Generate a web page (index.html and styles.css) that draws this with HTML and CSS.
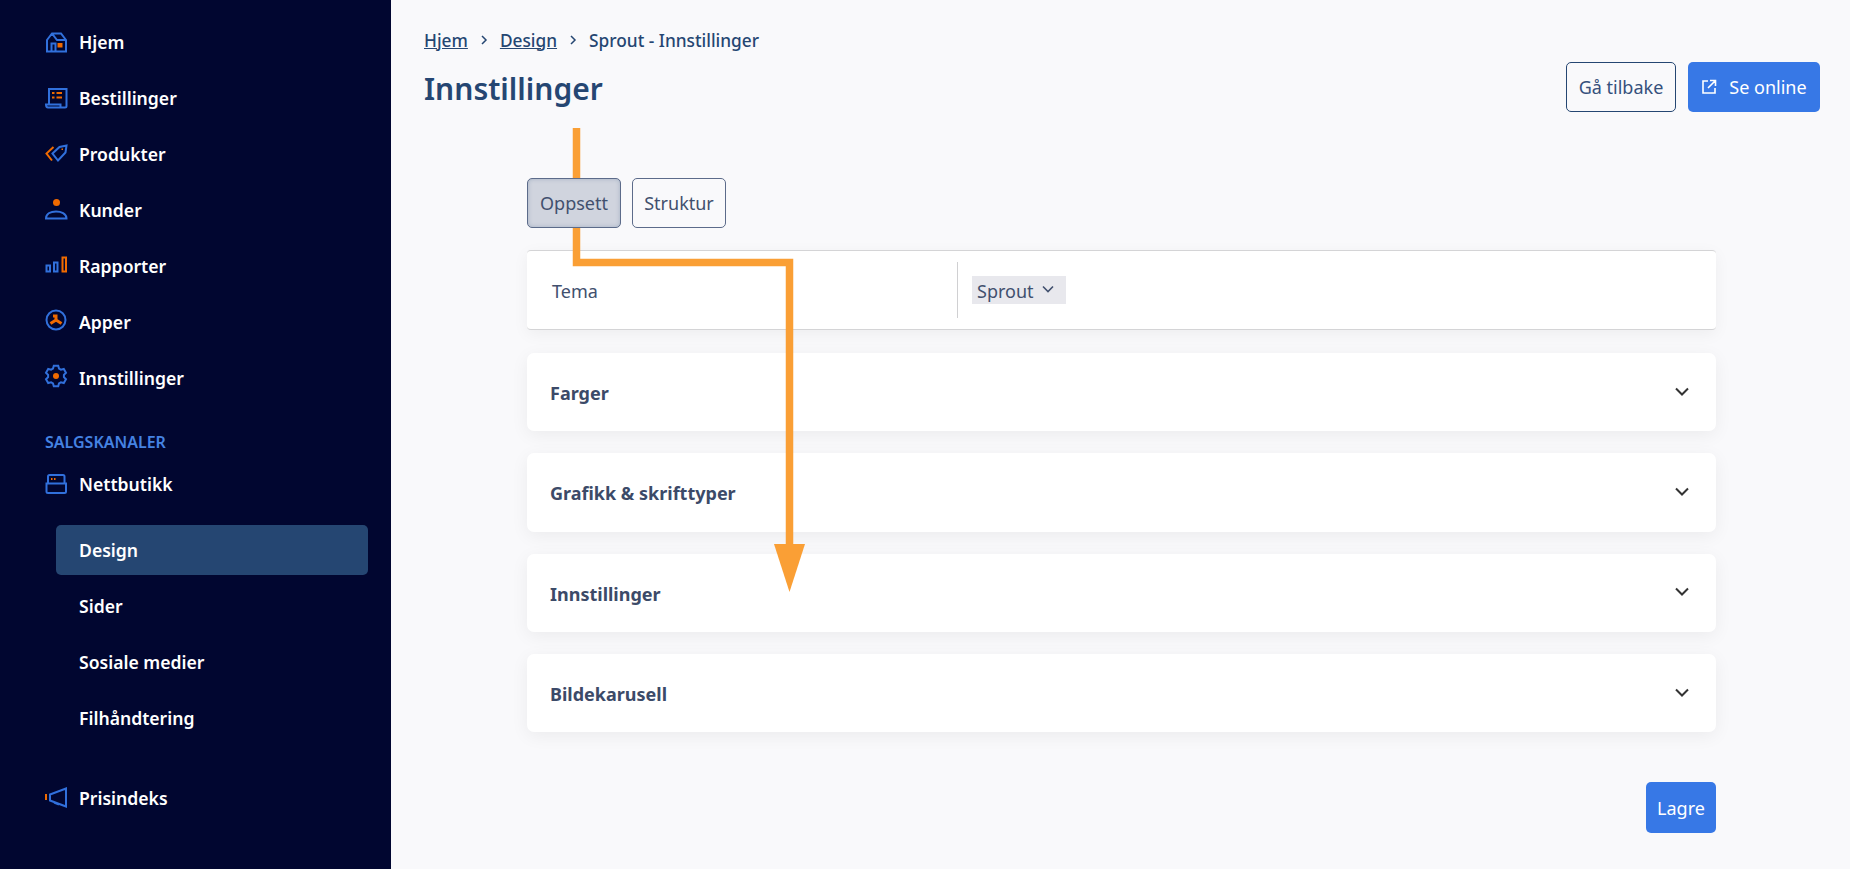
FILE: index.html
```html
<!DOCTYPE html>
<html lang="no">
<head>
<meta charset="UTF-8">
<meta name="viewport" content="width=device-width, initial-scale=1.0">
<title>Innstillinger</title>
<link rel="stylesheet" href="styles.css">
</head>
<body>

<aside class="sidebar">
    <nav class="nav-group">
        <a class="nav-item">
            <svg class="nav-icon" viewBox="0 0 22 22"><path class="ic-blue" d="M2 9 7 2.500H16L21 9V20.500H2ZM7 2.500 12 9H21M6.500 20.500V12.500H10.500V20.500"/><rect class="ic-orange-fill" x="12.500" y="12" width="5" height="4.500"/></svg>
            Hjem
        </a>
        <a class="nav-item">
            <svg class="nav-icon" viewBox="0 0 22 22"><path class="ic-blue" d="M4 17V2H21.500V19C21.500 20 21 20.500 20 20.500H3C1.800 20.500 1 19.500 1 17.500H15.500V20.500"/><path class="ic-orange" d="M7 6H9.500M7 10.500H9.500M11.500 6H17M11.500 10.500H17"/></svg>
            Bestillinger
        </a>
        <a class="nav-item">
            <svg class="nav-icon" viewBox="0 0 22 22"><path class="ic-blue" d="M7.500 10.500 14.500 4 21.500 2.500 20.500 9.500 13 17.500Z"/><path class="ic-orange" d="M8.500 4 1.500 10.500 7 17.500"/><rect class="ic-orange-fill" x="16.500" y="5.500" width="1.500" height="1.500"/></svg>
            Produkter
        </a>
        <a class="nav-item">
            <svg class="nav-icon" viewBox="0 0 22 22"><circle class="ic-orange-fill" cx="11.500" cy="3.500" r="3.500"/><path class="ic-blue" d="M1 19.500C1 14.500 6 12.500 11 12.500S21.500 14.500 21.500 19.500Z"/></svg>
            Kunder
        </a>
        <a class="nav-item">
            <svg class="nav-icon" viewBox="0 0 22 22"><path class="ic-blue" d="M1.500 10.500H5V16.500H1.500ZM9 7.500H12.500V16.500H9Z"/><path class="ic-orange" d="M17.500 2.500H21V16.500H17.500Z"/></svg>
            Rapporter
        </a>
        <a class="nav-item">
            <svg class="nav-icon" viewBox="0 0 22 22"><circle class="ic-blue" cx="11" cy="9" r="9.500"/><path class="ic-orange-thick" d="M11 3.500V9M11 9 5.500 12.500M11 9 16.500 12.500M8 5H11"/></svg>
            Apper
        </a>
        <a class="nav-item">
            <svg class="nav-icon" viewBox="0 0 22 22"><path class="ic-blue" transform="translate(0 -2)" d="M8.800.700H13.200L14 3.600 15.900 4.700 18.800 4 21 7.800 18.900 9.900V12.100L21 14.200 18.800 18 15.900 17.300 14 18.400 13.200 21.300H8.800L8 18.400 6.100 17.300 3.200 18 1 14.200 3.100 12.100V9.900L1 7.800 3.200 4 6.100 4.700 8 3.600Z"/><circle class="ic-orange-fill" cx="11" cy="9" r="3"/></svg>
            Innstillinger
        </a>
    </nav>

    <div class="nav-label">SALGSKANALER</div>
    <a class="nav-item">
        <svg class="nav-icon" viewBox="0 0 22 22"><path class="ic-blue" d="M3 10V3.500C3 2.500 3.500 2 4.500 2H18C19 2 19.500 2.500 19.500 3.500V10M1.500 10.500H21V18.500C21 19.500 20.500 20 19.500 20H3C2 20 1.500 19.500 1.500 18.500Z"/><path class="ic-orange" d="M6 6H7.500M9 6H10.500"/></svg>
        Nettbutikk
    </a>

    <div class="subnav">
        <a class="nav-item sub-item active">Design</a>
        <a class="nav-item sub-item">Sider</a>
        <a class="nav-item sub-item">Sosiale medier</a>
        <a class="nav-item sub-item">Filhåndtering</a>
    </div>

    <a class="nav-item nav-bottom">
        <svg class="nav-icon" viewBox="0 0 22 22"><path class="ic-blue" d="M21 1.500V19.500L5 13.500V7.500ZM9 15.500 14 17.500"/><path class="ic-orange" d="M1 7V13"/></svg>
        Prisindeks
    </a>
</aside>

<main class="main">
    <header class="page-head">
        <div>
            <div class="breadcrumb">
                <a>Hjem</a>
                <svg class="crumb-sep" viewBox="0 0 10 12"><path d="M3 2 7 6 3 10"/></svg>
                <a>Design</a>
                <svg class="crumb-sep" viewBox="0 0 10 12"><path d="M3 2 7 6 3 10"/></svg>
                <span>Sprout - Innstillinger</span>
            </div>
            <h1>Innstillinger</h1>
        </div>
        <div class="actions">
            <button class="btn btn-outline">Gå tilbake</button>
            <button class="btn btn-primary">
                <svg class="btn-icon" viewBox="0 0 16 16"><path d="M7 2H2V14H14V9M9 1.500H14.500V7M14 2 7 9"/></svg>
                Se online
            </button>
        </div>
    </header>

    <section class="content">
        <div class="tabs">
            <button class="tab tab-active">Oppsett</button>
            <button class="tab">Struktur</button>
        </div>

        <div class="theme-row">
            <div class="theme-label">Tema</div>
            <div class="theme-value">
                <span class="select-chip">Sprout
                    <svg class="chip-chevron" viewBox="0 0 12 8"><path d="M1 1.500 6 6.500 11 1.500"/></svg>
                </span>
            </div>
        </div>

        <div class="accordion">
            <div class="card"><span>Farger</span><svg class="card-chevron" viewBox="0 0 14 9"><path d="M1 1.500 7 7.500 13 1.500"/></svg></div>
            <div class="card"><span>Grafikk &amp; skrifttyper</span><svg class="card-chevron" viewBox="0 0 14 9"><path d="M1 1.500 7 7.500 13 1.500"/></svg></div>
            <div class="card"><span>Innstillinger</span><svg class="card-chevron" viewBox="0 0 14 9"><path d="M1 1.500 7 7.500 13 1.500"/></svg></div>
            <div class="card"><span>Bildekarusell</span><svg class="card-chevron" viewBox="0 0 14 9"><path d="M1 1.500 7 7.500 13 1.500"/></svg></div>
        </div>

        <div class="save-row">
            <button class="btn btn-primary btn-save">Lagre</button>
        </div>
    </section>
</main>

<!-- annotation drawn on top of the screenshot -->
<svg class="annotation" viewBox="0 0 1850 869">
    <path class="annotation-line" d="M576.500 128V262.500H789.500V550"/>
    <path class="annotation-head" d="M774 544H805L789.500 592Z"/>
</svg>

</body>
</html>
```

FILE: styles.css
```css
/* Global styles */
* {
    box-sizing: border-box;
}
html, body {
    height: 100%;
}
body {
    margin: 0;
    display: flex;
    height: 869px;
    overflow: hidden;
    font-family: "Noto Sans", "Open Sans", sans-serif;
    font-size: 18px;
    background-color: #f9f9fb;
    color: #41506e;
}

/* Sidebar */
.sidebar {
    width: 391px;
    flex: none;
    padding: 14px 0 0 45px;
    background-color: #010630;
    color: #fff;
}
.nav-item {
    display: flex;
    align-items: center;
    height: 56px;
    font-weight: 600;
    font-size: 17.600px;
}
.nav-icon {
    width: 22px;
    height: 22px;
    margin-right: 12px;
    flex: none;
    overflow: visible;
}
.ic-blue {
    fill: none;
    stroke: #3170dc;
    stroke-width: 2;
}
.ic-orange {
    fill: none;
    stroke: #f06a00;
    stroke-width: 2;
}
.ic-orange-thick {
    fill: none;
    stroke: #f06a00;
    stroke-width: 3;
}
.ic-orange-fill {
    fill: #f06a00;
}
.nav-label {
    height: 50px;
    padding-top: 25px;
    line-height: 22px;
    font-size: 16px;
    font-weight: 600;
    color: #4582e2;
}
.subnav {
    margin-top: 13px;
}
.sub-item {
    padding-left: 23px;
    margin-left: 11px;
    width: 312px;
}
.sub-item.active {
    height: 50px;
    margin-bottom: 3px;
    background-color: #254672;
    border-radius: 5px;
}
.nav-bottom {
    margin-top: 24px;
}

/* Main area */
.main {
    flex: 1;
    padding: 28px 30px 0 33px;
}
.page-head {
    display: flex;
    justify-content: space-between;
    align-items: flex-start;
}
.breadcrumb {
    display: flex;
    align-items: center;
    height: 24px;
    font-size: 17.300px;
    font-weight: 500;
    color: #254672;
}
.breadcrumb a {
    text-decoration: underline;
}
.crumb-sep {
    width: 10px;
    height: 12px;
    margin: 0 11px;
    fill: none;
    stroke: #254672;
    stroke-width: 1.500;
}
h1 {
    margin: 15px 0 0;
    font-size: 30px;
    line-height: 44px;
    font-weight: 600;
    color: #254672;
}
.actions {
    display: flex;
    gap: 12px;
    margin-top: 34px;
}
.btn {
    display: inline-flex;
    align-items: center;
    justify-content: center;
    height: 50px;
    border-radius: 5px;
    font-family: inherit;
    font-size: 18px;
}
.btn-outline {
    width: 110px;
    padding: 0;
    background-color: #f9f9fb;
    border: 1px solid #254672;
    color: #35507c;
}
.btn-primary {
    background-color: #3778e6;
    border: 0;
    padding: 0;
    color: #fff;
    width: 132px;
}
.btn-icon {
    width: 16px;
    height: 16px;
    margin-right: 12px;
    fill: none;
    stroke: #fff;
    stroke-width: 1.600;
}
.btn-save {
    width: 70px;
    height: 51px;
}

/* Settings content */
.content {
    margin: 66px 104px 0 103px;
}
.tabs {
    position: relative;
    z-index: 2;
    display: flex;
    gap: 11px;
}
.tab {
    height: 50px;
    width: 94px;
    padding: 0;
    border: 1px solid #5c6b8a;
    border-radius: 5px;
    background-color: #f9f9fb;
    font-family: inherit;
    font-size: 18px;
    color: #41506e;
}
.tab-active {
    background-color: #d0d4de;
    box-shadow: inset 0 0 4px rgba(37, 70, 114, 0.25);
}
.theme-row {
    display: flex;
    align-items: center;
    height: 80px;
    margin-top: 22px;
    background-color: #fff;
    border-top: 1px solid #d4d4d6;
    border-bottom: 1px solid #d4d4d6;
    border-radius: 4px;
    box-shadow: 0 4px 16px rgba(0, 0, 0, 0.05);
}
.theme-label {
    width: 430px;
    padding: 1px 0 0 25px;
}
.theme-value {
    display: flex;
    align-items: center;
    height: 56px;
    padding-left: 14px;
    border-left: 1px solid #d0d0d2;
}
.select-chip {
    display: flex;
    align-items: center;
    height: 28px;
    width: 94px;
    padding: 2px 0 0 5px;
    background-color: #e8e8ed;
}
.chip-chevron {
    width: 12px;
    height: 8px;
    margin-left: 8px;
    margin-top: -5px;
    fill: none;
    stroke: #41506e;
    stroke-width: 1.600;
}
.accordion {
    display: flex;
    flex-direction: column;
    gap: 22px;
    margin-top: 23px;
}
.card {
    display: flex;
    justify-content: space-between;
    align-items: center;
    height: 78.330px;
    padding: 0 27px 0 23px;
    background-color: #fff;
    border-radius: 7px;
    box-shadow: 0 4px 18px rgba(0, 0, 0, 0.06);
    font-weight: 700;
    color: #3c4a68;
}
.card span {
    padding-top: 2px;
}
.card-chevron {
    width: 14px;
    height: 9px;
    margin-top: -2px;
    fill: none;
    stroke: #333;
    stroke-width: 2;
}
.save-row {
    display: flex;
    justify-content: flex-end;
    margin-top: 50px;
}

/* Orange arrow, the tabs stay above it */
.annotation {
    position: absolute;
    z-index: 1;
    top: 0;
    left: 0;
    width: 1850px;
    height: 869px;
    pointer-events: none;
}
.annotation-line {
    fill: none;
    stroke: #fa9f35;
    stroke-width: 7.500;
}
.annotation-head {
    fill: #fa9f35;
}
```
